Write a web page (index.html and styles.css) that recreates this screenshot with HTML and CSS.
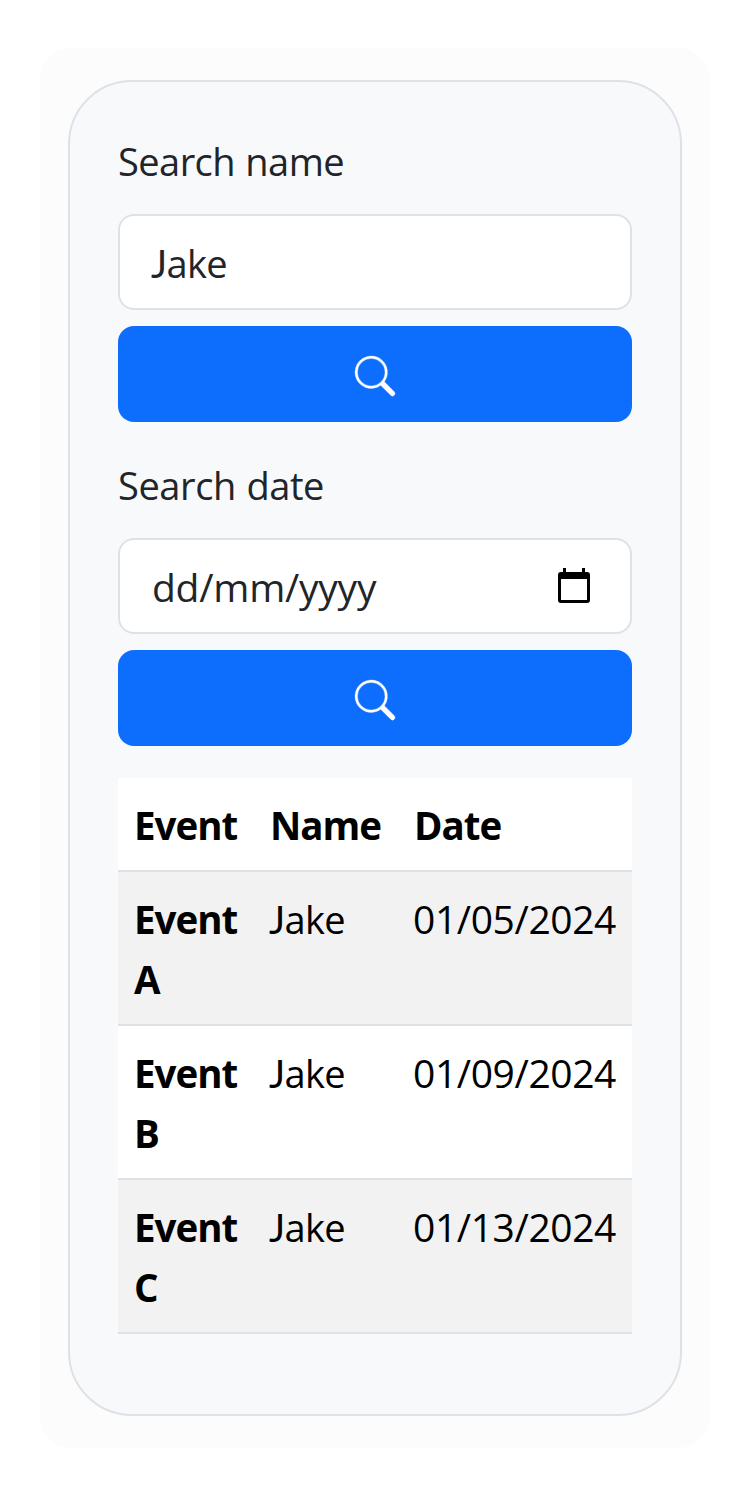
FILE: index.html
```html
<!DOCTYPE html>
<html lang="en">
<head>
<meta charset="utf-8">
<title>Event search</title>
<link rel="stylesheet" href="styles.css">
</head>
<body>
<main class="panel">
  <section class="card">
    <form class="group">
      <label class="label" for="name">Search name</label>
      <div class="field" id="name"><span class="person"><span class="initial">J</span>ake</span></div>
      <button class="btn" type="button" aria-label="Search by name">
        <svg class="search" viewBox="0 0 16 16"><path d="M11.742 10.344a6.500 6.500 0 1 0-1.397 1.398h-.001c.03.04.062.078.098.115l3.850 3.850a1 1 0 0 0 1.415-1.414l-3.850-3.850a1.007 1.007 0 0 0-.115-.1zM12 6.500a5.500 5.500 0 1 1-11 0 5.500 5.500 0 0 1 11 0z"/></svg>
      </button>
    </form>
    <form class="group">
      <label class="label label-date" for="date">Search date</label>
      <div class="field" id="date"><span class="placeholder">dd/mm/yyyy</span>
        <svg class="calendar" viewBox="0 0 32 36"><path fill-rule="evenodd" d="M5 0h3v4h16V0h3v4h2a3 3 0 0 1 3 3v25a3 3 0 0 1-3 3H3a3 3 0 0 1-3-3V7a3 3 0 0 1 3-3h2zM3 11v21h26V11z"/></svg>
      </div>
      <button class="btn" type="button" aria-label="Search by date">
        <svg class="search" viewBox="0 0 16 16"><path d="M11.742 10.344a6.500 6.500 0 1 0-1.397 1.398h-.001c.03.04.062.078.098.115l3.850 3.850a1 1 0 0 0 1.415-1.414l-3.850-3.850a1.007 1.007 0 0 0-.115-.1zM12 6.500a5.500 5.500 0 1 1-11 0 5.500 5.500 0 0 1 11 0z"/></svg>
      </button>
    </form>
    <table class="table">
      <thead><tr><th class="c-event">Event</th><th class="c-name">Name</th><th class="c-date">Date</th></tr></thead>
      <tbody>
        <tr><th>Event A</th><td><span class="person"><span class="initial">J</span>ake</span></td><td class="digits">01/05/2024</td></tr>
        <tr><th>Event B</th><td><span class="person"><span class="initial">J</span>ake</span></td><td class="digits">01/09/2024</td></tr>
        <tr><th>Event C</th><td><span class="person"><span class="initial">J</span>ake</span></td><td class="digits">01/13/2024</td></tr>
      </tbody>
    </table>
  </section>
</main>
</body>
</html>
```
FILE: styles.css
```css
* { box-sizing: border-box; }
body {
  margin: 0;
  padding: 48px 40px;
  background: #fff;
  color: #212529;
  font: 400 39px/60px "Segoe UI", "Open Sans", "Noto Sans", sans-serif;
}
.panel { height: 1400px; padding: 32px 28px; background: #fcfcfc; border-radius: 32px; }
.card {
  height: 1336px;
  padding: 48px;
  background: #f8f9fb;
  border: 2px solid #dee2e6;
  border-radius: 64px;
}
.group { display: flex; flex-direction: column; margin: 0 0 32px; }
.label {
  display: block;
  height: 60px;
  margin-bottom: 24px;
  padding-top: 1px;
  font-size: 38px;
  letter-spacing: -0.55px;
  word-spacing: 1px;
  white-space: nowrap;
}
.label-date { letter-spacing: -0.4px; }
.field {
  display: flex;
  align-items: center;
  justify-content: space-between;
  height: 96px;
  margin-bottom: 16px;
  padding: 2px 40px 0 32px;
  background: #fff;
  border: 2px solid #dee2e6;
  border-radius: 16px;
}
.placeholder { letter-spacing: -0.25px; }
.person { margin-left: -1px; font-size: 38px; letter-spacing: -0.6px; white-space: nowrap; }
.initial { font-family: Lato, sans-serif; line-height: 1; }
.btn {
  display: flex;
  align-items: center;
  justify-content: center;
  height: 96px;
  padding: 4px 0 0;
  background: #0d6efd;
  border: 0;
  border-radius: 16px;
}
.search { width: 40px; height: 40px; fill: #fff; stroke: #fff; stroke-width: 0.12; overflow: visible; }
.calendar { width: 32px; height: 36px; margin-top: -3px; fill: #000; }
.table { width: 514px; table-layout: fixed; border-collapse: separate; border-spacing: 0; color: #000; }
.table th, .table td {
  padding: 17px 0 15px 16px;
  text-align: left;
  vertical-align: top;
  background: #fff;
  border-bottom: 2px solid #dee2e6;
}
.table th { padding-right: 16px; font-size: 38.5px; font-weight: 700; letter-spacing: -1px; }
.table tbody tr:nth-child(odd) > * { background: #f2f2f2; }
.c-event { width: 136px; }
.c-name { width: 144px; }
.table .digits { padding-left: 15px; letter-spacing: -0.4px; white-space: nowrap; }
```
